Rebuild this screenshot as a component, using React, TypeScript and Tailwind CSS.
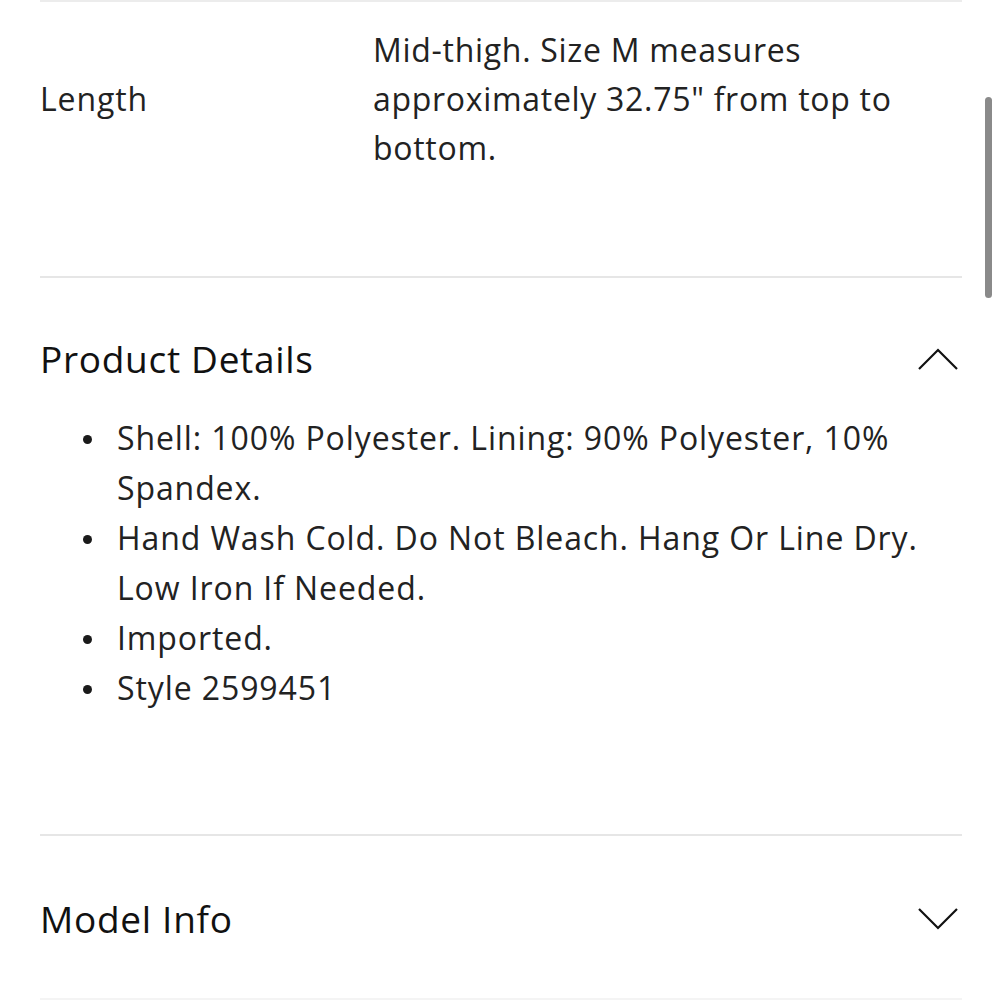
import React from "react";

const bullets: string[][] = [
  ["Shell: 100% Polyester. Lining: 90% Polyester, 10%", "Spandex."],
  ["Hand Wash Cold. Do Not Bleach. Hang Or Line Dry.", "Low Iron If Needed."],
  ["Imported."],
  ["Style 2599451"],
];

export default function App() {
  return (
    <div className="relative w-[1000px] h-[1000px] overflow-hidden bg-white text-[#222222] font-['Open_Sans',_'Liberation_Sans',_sans-serif]">
      <div className="ml-[40px] w-[922px]">
        <div className="border-t-2 border-[#ececec] flex items-center pt-[23px] pb-[104px]">
          <div className="w-[333px] text-[32px] leading-[49px] tracking-[0.9px]">Length</div>
          <div className="text-[32px] leading-[49px] tracking-[0.7px]">
            <div>Mid-thigh. Size M measures</div>
            <div>approximately 32.75" from top to</div>
            <div>bottom.</div>
          </div>
        </div>
        <div className="border-t-2 border-[#e6e6e6] pt-[61px] pb-[121px]">
          <div className="flex items-center justify-between h-[40px]">
            <div className="text-[37px] leading-[40px] tracking-[0.7px] text-[#111]">Product Details</div>
            <svg width="40" height="22" viewBox="0 0 40 22" className="mr-[4px]">
              <polyline points="1,21 20,2 39,21" fill="none" stroke="#111" strokeWidth="2.2" />
            </svg>
          </div>
          <div className="mt-[34px] text-[32px] leading-[50px] tracking-[0.9px]">
            {bullets.map((b, i) => (
              <div key={i} className="flex">
                <div className="w-[77px] shrink-0 flex items-start h-[50px]">
                  <span className="ml-[43px] mt-[22px] w-[9px] h-[9px] rounded-full bg-[#1a1a1a]" />
                </div>
                <div>
                  {b.map((l, j) => (
                    <div key={j}>{l}</div>
                  ))}
                </div>
              </div>
            ))}
          </div>
        </div>
        <div className="border-t-2 border-[#e6e6e6] pt-[63px]">
          <div className="flex items-center justify-between h-[40px]">
            <div className="text-[37px] leading-[40px] tracking-[0.7px] text-[#111]">Model Info</div>
            <svg width="40" height="22" viewBox="0 0 40 22" className="mr-[4px]">
              <polyline points="1,1 20,20 39,1" fill="none" stroke="#111" strokeWidth="2.2" />
            </svg>
          </div>
        </div>
      </div>
      <div className="absolute left-[40px] top-[998px] w-[922px] h-[2px] bg-[#f4f4f4]" />
      <div className="absolute left-[985px] top-[97px] w-[7px] h-[201px] rounded-full bg-[#8a8a8a]" />
    </div>
  );
}
